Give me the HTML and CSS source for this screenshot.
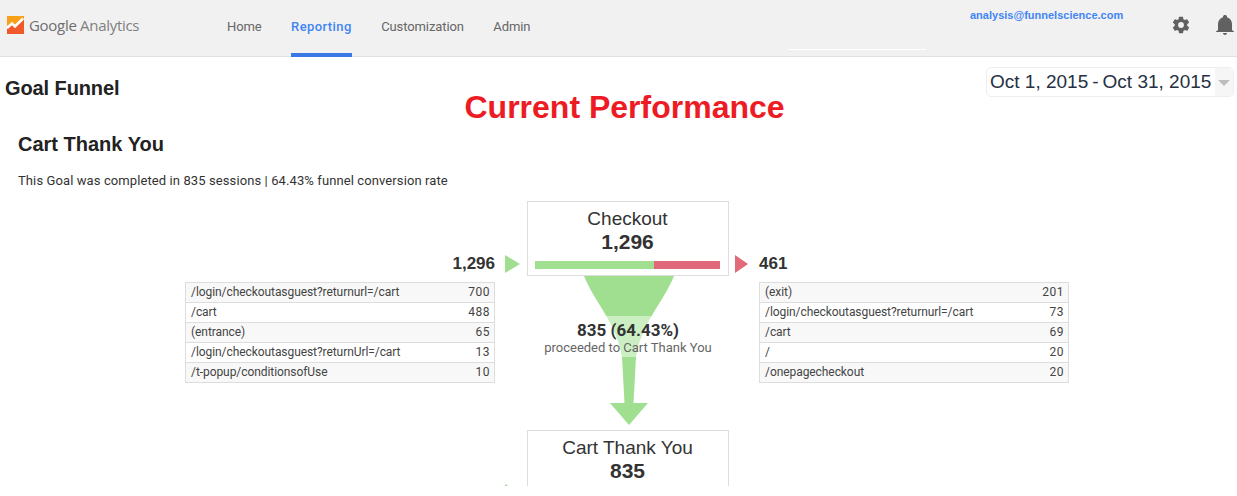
FILE: index.html
```html
<!DOCTYPE html>
<html lang="en">
<head>
    <meta charset="UTF-8">
    <title>Goal Funnel - Google Analytics</title>
    <link rel="stylesheet" href="styles.css">
</head>
<body>
    <div class="Header">
        <div class="logo">
            <svg class="logoMark" width="17" height="18" viewBox="0 0 17 18">
                <rect width="17" height="18" fill="#f9a01b"/>
                <path d="M0 18V11L5 8L8 11L17 4V18Z" fill="#f0592a"/>
                <path d="M0 12L5 7.500L8 10.500L16 2.500" fill="none" stroke="#fff" stroke-width="2.500"/>
            </svg>
            <span class="logoText"><b>Google</b> Analytics</span>
        </div>
        <div class="nav">
            <a class="navItem">Home</a>
            <a class="navItem active">Reporting</a>
            <a class="navItem">Customization</a>
            <a class="navItem">Admin</a>
        </div>
        <div class="account">
            <div class="accountLine"></div>
            <div class="email">analysis@funnelscience.com</div>
        </div>
        <svg class="gear" width="20" height="20" viewBox="0 0 24 24">
            <path fill="#616161" d="M19.4 13c.04-.33.06-.66.06-1s-.02-.67-.07-1l2.1-1.65c.2-.15.24-.42.12-.64l-2-3.46c-.12-.22-.38-.3-.6-.22l-2.5 1c-.52-.4-1.08-.72-1.69-.98l-.38-2.65A.49.49 0 0 0 14 2h-4c-.25 0-.46.18-.49.42l-.38 2.65c-.61.26-1.17.59-1.69.98l-2.5-1c-.22-.08-.48 0-.6.22l-2 3.46c-.13.22-.07.49.12.64L4.57 11c-.04.33-.07.67-.07 1s.03.67.07 1l-2.11 1.65c-.19.15-.25.42-.12.64l2 3.46c.12.22.38.3.6.22l2.5-1c.52.4 1.08.72 1.69.98l.38 2.65c.03.24.24.42.49.42h4c.25 0 .46-.18.49-.42l.38-2.65c.61-.26 1.17-.59 1.69-.98l2.5 1c.22.08.48 0 .6-.22l2-3.46c.12-.22.07-.49-.12-.64L19.4 13zM12 15.5a3.5 3.5 0 1 1 0-7 3.5 3.5 0 0 1 0 7z"/>
        </svg>
        <svg class="bell" width="24" height="24" viewBox="0 0 24 24">
            <path fill="#616161" d="M12 22c1.1 0 2-.9 2-2h-4c0 1.100.9 2 2 2zm7-5v-6c0-3.300-2-6-5-6.800V3.500C14 2.700 13.100 2 12 2s-2 .7-2 1.500v.7C7 5 5 7.700 5 11v6l-2 1.500V19h18v-.5L19 17z"/>
        </svg>
    </div>

    <div class="main">
        <div class="pageHead">
            <h2 class="pageTitle">Goal Funnel</h2>
            <div class="banner">Current Performance</div>
            <div class="datePicker">
                <span class="dateText"><span>Oct 1, 2015</span><span>-</span><span>Oct 31, 2015</span></span>
                <span class="dateArrow"><i class="caret"></i></span>
            </div>
        </div>

        <h2 class="goalName">Cart Thank You</h2>
        <p class="goalSummary">This Goal was completed in 835 sessions | 64.43% funnel conversion rate</p>

        <div class="funnelRow">
            <div class="side sideLeft">
                <div class="count">
                    <span>1,296</span>
                    <i class="arrow arrowGreen"></i>
                </div>
                <div class="pages">
                    <div class="pageRow"><span>/login/checkoutasguest?returnurl=/cart</span><span class="num">700</span></div>
                    <div class="pageRow"><span>/cart</span><span class="num">488</span></div>
                    <div class="pageRow"><span>(entrance)</span><span class="num">65</span></div>
                    <div class="pageRow"><span>/login/checkoutasguest?returnUrl=/cart</span><span class="num">13</span></div>
                    <div class="pageRow"><span>/t-popup/conditionsofUse</span><span class="num">10</span></div>
                </div>
            </div>
            <div class="middle">
                <div class="stepBox">
                    <div class="stepName">Checkout</div>
                    <div class="stepValue">1,296</div>
                    <div class="stepBar">
                        <div class="barGreen" style="width: 64.4%"></div>
                        <div class="barRed" style="width: 35.6%"></div>
                    </div>
                </div>
                <div class="connector">
                    <svg width="202" height="154" viewBox="0 0 202 154">
                        <path fill="#9fdf8f" d="M57 0C68 27 89 46 95 81L97.500 127H83L102 149L121 127H106.500L109 81C115 46 136 27 147 0Z"/>
                    </svg>
                    <div class="proceed">
                        <div class="proceedValue">835 (64.43%)</div>
                        <div class="proceedText">proceeded to Cart Thank You</div>
                    </div>
                </div>
            </div>
            <div class="side sideRight">
                <div class="count">
                    <i class="arrow arrowRed"></i>
                    <span>461</span>
                </div>
                <div class="pages">
                    <div class="pageRow"><span>(exit)</span><span class="num">201</span></div>
                    <div class="pageRow"><span>/login/checkoutasguest?returnurl=/cart</span><span class="num">73</span></div>
                    <div class="pageRow"><span>/cart</span><span class="num">69</span></div>
                    <div class="pageRow"><span>/</span><span class="num">20</span></div>
                    <div class="pageRow"><span>/onepagecheckout</span><span class="num">20</span></div>
                </div>
            </div>
        </div>

        <div class="funnelRow">
            <div class="side sideLeft">
                <div class="count">
                    <span></span>
                    <i class="arrow arrowGreen"></i>
                </div>
            </div>
            <div class="middle">
                <div class="stepBox">
                    <div class="stepName">Cart Thank You</div>
                    <div class="stepValue">835</div>
                </div>
            </div>
            <div class="side"></div>
        </div>
    </div>
</body>
</html>
```

FILE: styles.css
```css
* {
    box-sizing: border-box;
}
html, body {
    margin: 0;
    height: 486px;
    overflow: hidden;
    background-color: white;
    font-family: "Liberation Sans", Arial, sans-serif;
    color: #222;
}
.Header {
    height: 57px;
    background-color: #f1f1f1;
    border-bottom: 1px solid #e0e0e0;
    display: flex;
    align-items: flex-start;
}
.logo {
    width: 227px;
    padding: 16px 0 0 7px;
    display: flex;
    align-items: flex-start;
}
.logoText {
    margin-left: 5px;
    font-family: "Open Sans", sans-serif;
    font-size: 15px;
    line-height: 18px;
    letter-spacing: -0.3px;
    color: #80807f;
    white-space: nowrap;
}
.logoText b {
    font-weight: 400;
    color: #6e6e6e;
}
.nav {
    display: flex;
    gap: 29.5px;
}
.navItem {
    height: 57px;
    padding-top: 19px;
    font-family: Roboto, sans-serif;
    font-size: 13px;
    line-height: 16px;
    letter-spacing: -0.1px;
    color: #666;
}
.active {
    color: #4285f4;
    font-weight: 500;
    letter-spacing: 0.4px;
    border-bottom: 4px solid #3b78e7;
}
.account {
    flex: none;
    width: 382px;
    margin-left: auto;
    display: flex;
}
.accountLine {
    flex: none;
    width: 138px;
    height: 1px;
    margin-top: 49px;
    background-color: white;
}
.email {
    margin: 9px 0 0 44px;
    font-size: 11px;
    line-height: 13px;
    font-weight: bold;
    color: #4285f4;
    white-space: nowrap;
}
.gear {
    flex: none;
    margin: 15px 0 0 1px;
}
.bell {
    flex: none;
    margin: 13px 0 0 22px;
}
.main {
    height: 429px;
    overflow: hidden;
}
.pageHead {
    height: 70px;
    padding: 10px 3px 0 5px;
    display: flex;
    align-items: flex-start;
}
.pageTitle {
    margin: 9px 0 0 0;
    font-size: 20px;
    line-height: 24px;
    letter-spacing: -0.1px;
}
.banner {
    margin: 22px 0 0 345px;
    font-size: 32px;
    line-height: 36px;
    font-weight: bold;
    color: #ed1c24;
    white-space: nowrap;
}
.datePicker {
    width: 248px;
    height: 30px;
    margin-left: auto;
    border: 1px solid #eee;
    border-radius: 5px;
    display: flex;
}
.dateText {
    width: 228px;
    padding-left: 3px;
    display: flex;
    gap: 4px;
    font-size: 19px;
    line-height: 27px;
    white-space: nowrap;
    color: #263044;
}
.dateArrow {
    flex: 1;
    background-color: #f6f6f6;
    display: flex;
    justify-content: center;
    padding-top: 12px;
}
.caret {
    width: 0;
    height: 0;
    border-left: 6px solid transparent;
    border-right: 6px solid transparent;
    border-top: 6px solid #bdbdbd;
}
.goalName {
    margin: 5px 0 0 18px;
    font-size: 20px;
    line-height: 24px;
}
.goalSummary {
    margin: 18px 0 0 18px;
    font-family: Roboto, sans-serif;
    font-size: 13px;
    line-height: 14px;
    letter-spacing: 0.1px;
    color: #333;
}
.funnelRow {
    margin-top: 13px;
    display: grid;
    grid-template-columns: 527px 202px 1fr;
    height: 229px;
}
.funnelRow + .funnelRow {
    margin-top: 0;
}
.side {
    padding-top: 54px;
}
.sideLeft {
    padding-left: 185px;
}
.count {
    height: 18px;
    display: flex;
    align-items: center;
    font-size: 17px;
    font-weight: bold;
    color: #333;
}
.sideLeft .count {
    justify-content: flex-end;
    padding-right: 7px;
    gap: 10px;
}
.sideRight .count {
    padding-left: 6px;
    gap: 11px;
}
.arrow {
    width: 0;
    height: 0;
    border-top: 9px solid transparent;
    border-bottom: 9px solid transparent;
}
.arrowGreen {
    border-left: 15px solid #9fdf8f;
}
.arrowRed {
    border-left: 13px solid #e0697a;
}
.pages {
    width: 310px;
    margin-top: 9px;
    border: 1px solid #ddd;
    border-bottom: none;
    font-family: Roboto, sans-serif;
    font-size: 12px;
    letter-spacing: -0.07px;
    color: #444;
}
.sideRight .pages {
    margin-left: 30px;
}
.pageRow {
    height: 20px;
    padding: 0 4px 0 5px;
    border-bottom: 1px solid #ddd;
    display: flex;
    justify-content: space-between;
    line-height: 19px;
}
.num {
    letter-spacing: 0.5px;
}
.pageRow:nth-child(odd) {
    background-color: #f8f8f8;
}
.stepBox {
    height: 75px;
    padding: 6px 8px 0 7px;
    border: 1px solid #ddd;
    text-align: center;
}
.stepName {
    font-size: 19px;
    line-height: 22px;
    color: #333;
}
.stepValue {
    font-size: 21px;
    line-height: 24px;
    font-weight: bold;
    color: #333;
}
.stepBar {
    height: 8px;
    margin-top: 7px;
    display: flex;
}
.barGreen {
    background-color: #9fdf8f;
}
.barRed {
    background-color: #e0697a;
}
.connector {
    position: relative;
    height: 154px;
}
.connector svg {
    display: block;
}
/* text sits over the funnel graphic and washes it out */
.proceed {
    position: absolute;
    left: 0;
    right: 0;
    top: 40px;
    height: 41px;
    padding-top: 4px;
    text-align: center;
    background-color: rgba(255, 255, 255, 0.47);
}
.proceedValue {
    font-family: Roboto, sans-serif;
    font-size: 17px;
    line-height: 20px;
    font-weight: 700;
    color: #333;
}
.proceedText {
    font-family: Roboto, sans-serif;
    font-size: 13px;
    line-height: 16px;
    color: #666;
}
```
